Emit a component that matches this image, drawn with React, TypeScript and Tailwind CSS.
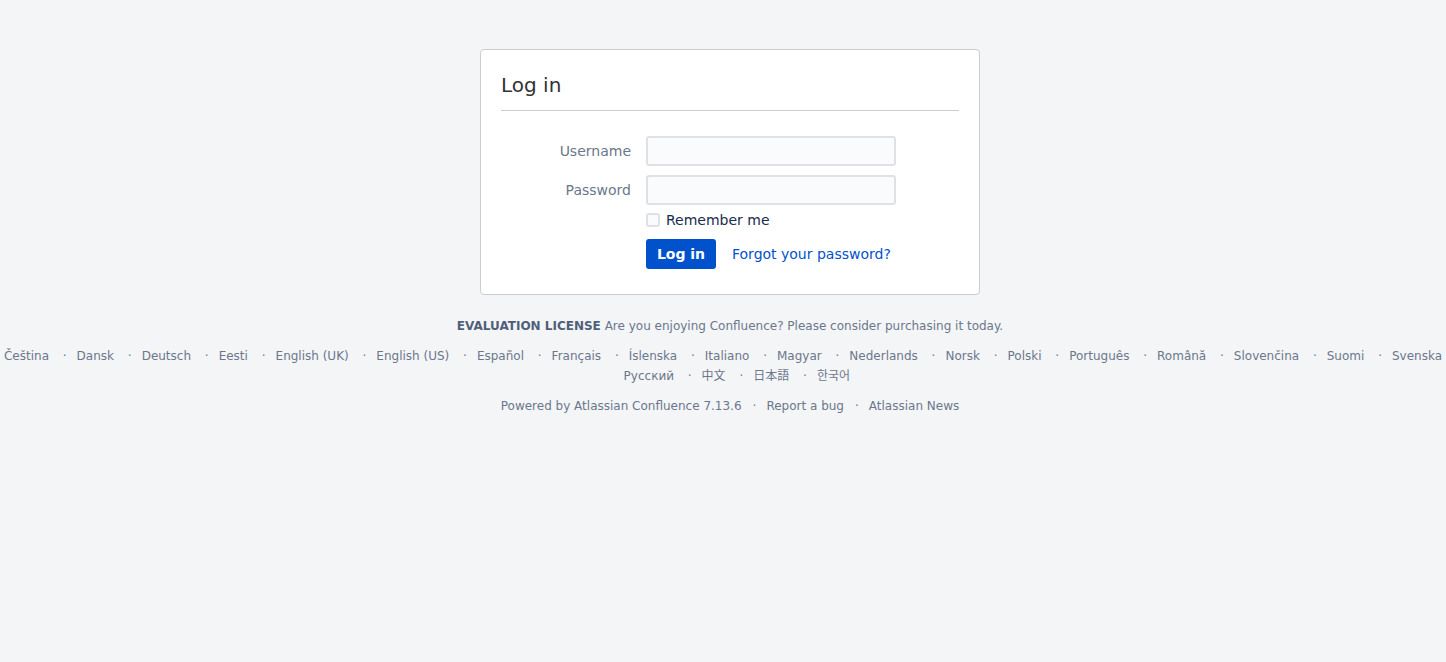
import React from "react"

const languages = [
  "Čeština",
  "Dansk",
  "Deutsch",
  "Eesti",
  "English (UK)",
  "English (US)",
  "Español",
  "Français",
  "Íslenska",
  "Italiano",
  "Magyar",
  "Nederlands",
  "Norsk",
  "Polski",
  "Português",
  "Română",
  "Slovenčina",
  "Suomi",
  "Svenska",
  "Русский",
  "中文",
  "日本語",
  "한국어",
]

const font = "font-['DejaVu_Sans','Noto_Sans_CJK_JP','Noto_Sans_CJK_KR',sans-serif]"

function FieldRow({ label, children, className = "" }: { label?: string; children: React.ReactNode; className?: string }) {
  return (
    <div className={`flex items-center ${className}`}>
      <label className="w-[130px] mr-[15px] text-right text-[14px] text-[#6b778c]">{label}</label>
      <div className="flex items-center">{children}</div>
    </div>
  )
}

export default function App() {
  return (
    <div className={`min-h-screen bg-[#f4f5f7] pt-[49px] text-[#172b4d] ${font}`}>
      {/* Login card */}
      <div className="pl-[14px]">
        <div className="mx-auto w-[500px] rounded-[4px] border border-[#cccccc] bg-white px-[20px] pt-[20px] pb-[25px]">
          <h1 className="border-b border-[#cccccc] pt-[1px] pb-[11px] text-[20px] leading-[28px] font-normal text-[#333333]">
            Log in
          </h1>

          <form onSubmit={(e) => e.preventDefault()}>
            <FieldRow label="Username" className="mt-[25px]">
              <input className="h-[30px] w-[250px] rounded-[3px] border-2 border-[#dfe1e6] bg-[#fafbfc] px-[6px] text-[14px] outline-none" />
            </FieldRow>
            <FieldRow label="Password" className="mt-[9px]">
              <input
                type="password"
                className="h-[30px] w-[250px] rounded-[3px] border-2 border-[#dfe1e6] bg-[#fafbfc] px-[6px] text-[14px] outline-none"
              />
            </FieldRow>
            <FieldRow className="mt-[5px] h-[20px]">
              <span className="h-[14px] w-[14px] rounded-[3px] border-2 border-[#dfe1e6] bg-[#fafbfc]" />
              <span className="ml-[6px] text-[14px] leading-[20px] text-[#172b4d]">Remember me</span>
            </FieldRow>
            <FieldRow className="mt-[9px]">
              <button className="flex h-[30px] w-[70px] items-center justify-center rounded-[3px] bg-[#0052cc] text-[14px] font-bold text-white">
                Log in
              </button>
              <a href="#" className="ml-[16px] text-[14px] text-[#0052cc]">
                Forgot your password?
              </a>
            </FieldRow>
          </form>
        </div>
      </div>

      {/* Footer */}
      <div className="mt-[21px] text-center text-[12px] leading-[20px] text-[#6b778c]">
        <p className="pl-[14px]">
          <span className="font-bold text-[#505f79]">EVALUATION LICENSE</span> Are you enjoying Confluence? Please
          consider purchasing it today.
        </p>

        <ul className="mt-[10px] flex flex-wrap justify-center">
          {languages.map((lang, i) => (
            <li key={lang} className="flex">
              {i > 0 && (
                <span className={`ml-[13.8px] mr-[10px] ${lang === "Русский" ? "text-transparent" : ""}`}>·</span>
              )}
              <a href="#" className="text-[#6b778c]">
                {lang}
              </a>
            </li>
          ))}
        </ul>

        <ul className="mt-[10px] flex justify-center pl-[14px]">
          <li>
            <a href="#">Powered by Atlassian Confluence 7.13.6</a>
          </li>
          <li className="flex">
            <span className="ml-[11px] mr-[10px]">·</span>
            <a href="#">Report a bug</a>
          </li>
          <li className="flex">
            <span className="ml-[11px] mr-[10px]">·</span>
            <a href="#">Atlassian News</a>
          </li>
        </ul>
      </div>
    </div>
  )
}
